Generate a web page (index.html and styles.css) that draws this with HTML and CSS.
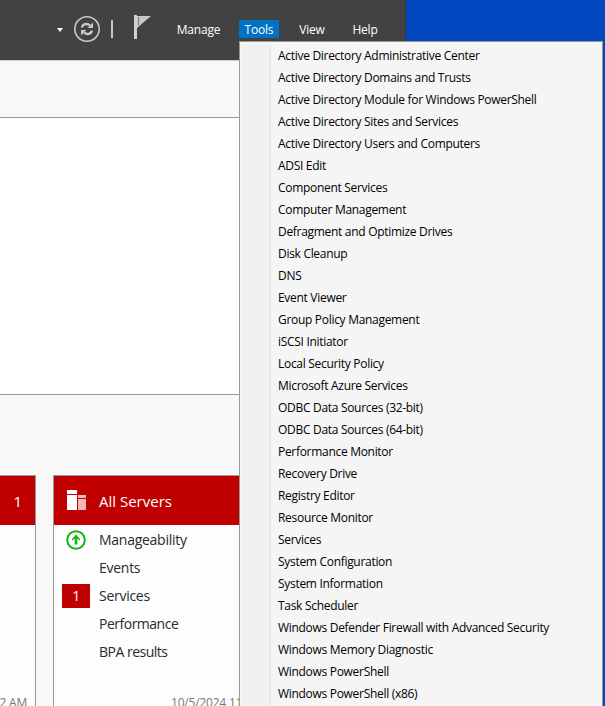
FILE: index.html
```html
<!DOCTYPE html>
<html lang="en">
<head>
<meta charset="utf-8">
<title>Server Manager</title>
<link rel="stylesheet" href="styles.css">
</head>
<body>
<div class="window">
  <header class="topbar">
    <span class="caret"></span>
    <svg class="refresh" width="26" height="26" viewBox="0 0 26 26" fill="none" stroke="#c8c8c8">
      <circle cx="13" cy="13" r="12.2" stroke-width="1.6"/>
      <path d="M8 11.5C8.7 8 13 6.8 16 9.4M18 14.5C17.3 18 13 19.2 10 16.6" stroke-width="2.4"/>
      <path d="M19 6.5V12H13.5ZM7 19.5V14H12.5Z" fill="#c8c8c8" stroke="none"/>
    </svg>
    <span class="divider"></span>
    <svg class="flag" width="18" height="24" viewBox="0 0 18 24">
      <path d="M0 0H3V24H0Z" fill="#d0d0d0"/>
      <path d="M3 1H17L3 13Z" fill="#c8c8c8"/>
      <path d="M4.5 2V10" stroke="#777" stroke-width="1"/>
    </svg>
    <nav class="nav">
      <span class="tab manage">Manage</span>
      <span class="tab tools active">Tools</span>
      <span class="tab view">View</span>
      <span class="tab help">Help</span>
    </nav>
  </header>
  <div class="strip"></div>
  <section class="welcome"></section>
  <main class="tiles">
    <section class="tile first">
      <h2 class="tile-head"><span>1</span></h2>
      <footer class="stamp">10/5/2024 11:22 AM</footer>
    </section>
    <section class="tile servers">
      <h2 class="tile-head">
        <svg class="server-icon" width="20" height="20" viewBox="0 0 20 20" shape-rendering="crispEdges">
          <path d="M0 0H10V4H0ZM0 5H10V20H0Z" fill="#fff"/>
          <path d="M11 5H19V8H11ZM11 9H19V20H11Z" fill="#f0b8b8"/>
        </svg>
        <span>All Servers</span>
      </h2>
      <ul class="rows">
        <li><span class="mark"><svg width="20" height="20" viewBox="0 0 20 20"><circle cx="10" cy="10" r="8.8" fill="none" stroke="#12b712" stroke-width="2"/><path d="M10 4.5L14 9V10.8L11.3 8.6V14.5H8.7V8.6L6 10.8V9Z" fill="#12b712"/></svg></span><span>Manageability</span></li>
        <li><span class="mark"></span><span>Events</span></li>
        <li><span class="mark"><b class="count">1</b></span><span>Services</span></li>
        <li><span class="mark"></span><span class="tight">Performance</span></li>
        <li><span class="mark"></span><span class="tight">BPA results</span></li>
      </ul>
      <footer class="stamp">10/5/2024 11:22 AM</footer>
    </section>
  </main>
</div>
<ul class="menu">
  <li>Active Directory Administrative Center</li>
  <li>Active Directory Domains and Trusts</li>
  <li>Active Directory Module for Windows PowerShell</li>
  <li>Active Directory Sites and Services</li>
  <li>Active Directory Users and Computers</li>
  <li>ADSI Edit</li>
  <li>Component Services</li>
  <li>Computer Management</li>
  <li>Defragment and Optimize Drives</li>
  <li>Disk Cleanup</li>
  <li>DNS</li>
  <li>Event Viewer</li>
  <li>Group Policy Management</li>
  <li>iSCSI Initiator</li>
  <li>Local Security Policy</li>
  <li>Microsoft Azure Services</li>
  <li>ODBC Data Sources (32-bit)</li>
  <li>ODBC Data Sources (64-bit)</li>
  <li>Performance Monitor</li>
  <li>Recovery Drive</li>
  <li>Registry Editor</li>
  <li>Resource Monitor</li>
  <li>Services</li>
  <li>System Configuration</li>
  <li>System Information</li>
  <li>Task Scheduler</li>
  <li>Windows Defender Firewall with Advanced Security</li>
  <li>Windows Memory Diagnostic</li>
  <li>Windows PowerShell</li>
  <li>Windows PowerShell (x86)</li>
</ul>
</body>
</html>
```
FILE: styles.css
```css
* { box-sizing: border-box; }
body {
  margin: 0;
  width: 605px;
  height: 706px;
  position: relative;
  overflow: hidden;
  background: #0348c0;
  font-family: "Open Sans", "Noto Sans", sans-serif;
  font-size: 12px;
}
ul, h2 { margin: 0; padding: 0; list-style: none; font-weight: 400; }
.window {
  width: 406px;
  height: 706px;
  display: flex;
  flex-direction: column;
  background: #f8f8f8;
  border-right: 1px solid #34383f;
}
.topbar {
  flex: none;
  height: 60px;
  display: flex;
  align-items: flex-start;
  background: #424242;
  color: #fff;
}
.caret {
  margin: 28px 0 0 57px;
  border: 3.5px solid transparent;
  border-top: 4px solid #fff;
  border-bottom: 0;
}
.refresh { margin: 16px 0 0 11px; }
.divider { width: 2px; height: 18px; margin: 20px 0 0 11px; background: #c8c8c8; }
.flag { margin: 15px 0 0 21px; }
.nav { display: flex; margin: 20px 0 0 19px; line-height: 20px; letter-spacing: -0.2px; }
.tab { height: 18px; text-align: center; white-space: nowrap; }
.manage { width: 55px; }
.tools { width: 40px; margin-left: 13px; }
.view { width: 40px; margin-left: 13px; }
.help { width: 40px; margin-left: 13px; }
.active { background: #0072c1; }
.strip { flex: none; height: 57px; border-top: 1px solid #d0d0d0; }
.welcome { flex: none; height: 278px; background: #fff; border: solid #999; border-width: 1px 0; }
.tiles { display: flex; flex: none; height: 231px; margin-top: 80px; }
.tile {
  display: flex;
  flex-direction: column;
  background: #fdfdfd;
  border: 1px solid #999;
  border-bottom: 0;
  overflow: hidden;
}
.first { width: 36px; border-left: 0; margin-right: 17px; align-items: flex-end; }
.servers { width: 300px; }
.tile-head {
  flex: none;
  display: flex;
  align-items: center;
  width: 100%;
  height: 49px;
  background: #c00000;
  color: #fff;
  font-size: 15px;
}
.first .tile-head { justify-content: flex-end; padding-right: 13px; }
.server-icon { margin: -1px 12px 0 13px; }
.rows { color: #2b2b2b; font-size: 14px; letter-spacing: -0.27px; }
.rows li { display: flex; align-items: center; height: 28px; }
.rows .tight { letter-spacing: -0.5px; }
.mark { width: 28px; height: 24px; margin: 2px 9px 0 8px; display: flex; align-items: center; justify-content: center; }
.count { width: 28px; height: 24px; background: #c00000; color: #fff; font-weight: 400; line-height: 24px; text-align: center; }
.stamp { margin-top: auto; height: 12px; line-height: 18px; color: #777; white-space: nowrap; letter-spacing: -0.2px; }
.first .stamp { padding-right: 8px; }
.servers .stamp { padding-left: 117px; }
.menu {
  position: absolute;
  left: 239px;
  top: 41px;
  width: 364px;
  height: 670px;
  padding: 3px 0 0 2px;
  border: 1px solid #999;
  background: #f5f5f5;
  color: #000;
}
.menu li {
  height: 22px;
  line-height: 22px;
  padding-left: 8px;
  border-left: 28px solid #f0f0f0;
  box-shadow: inset 1px 0 #e2e2e2;
  white-space: nowrap;
  letter-spacing: -0.3px;
}
```
